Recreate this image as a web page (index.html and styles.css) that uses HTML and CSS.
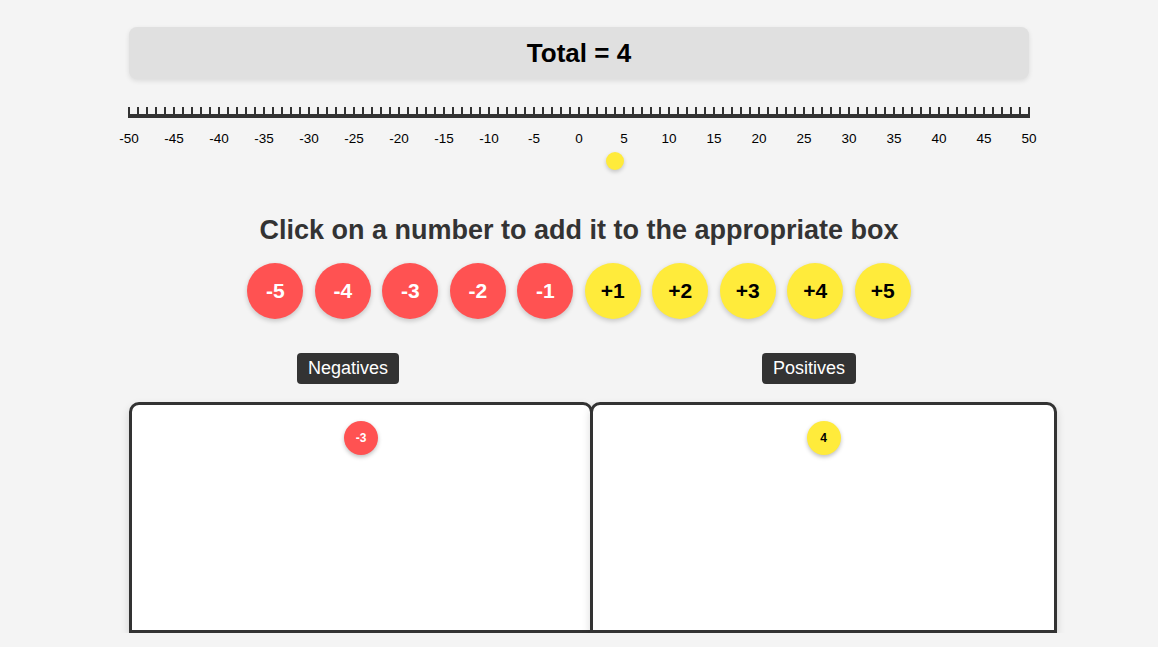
FILE: index.html
```html
<!DOCTYPE html>
<html>
<head>
<meta charset="utf-8">
<link rel="stylesheet" href="styles.css">
</head>
<body>
<div class="app">
  <div class="total">Total = 4</div>
  <div class="numberline">
    <div class="ticks"></div>
    <div class="axis"></div>
    <div class="labels">
      <span>-50</span><span>-45</span><span>-40</span><span>-35</span><span>-30</span><span>-25</span><span>-20</span><span>-15</span><span>-10</span><span>-5</span><span>0</span><span>5</span><span>10</span><span>15</span><span>20</span><span>25</span><span>30</span><span>35</span><span>40</span><span>45</span><span>50</span>
    </div>
    <div class="dot-row"><div class="dot" style="margin-left: 477px"></div></div>
  </div>
  <h2 class="prompt">Click on a number to add it to the appropriate box</h2>
  <div class="buttons">
    <button class="num neg">-5</button>
    <button class="num neg">-4</button>
    <button class="num neg">-3</button>
    <button class="num neg">-2</button>
    <button class="num neg">-1</button>
    <button class="num pos">+1</button>
    <button class="num pos">+2</button>
    <button class="num pos">+3</button>
    <button class="num pos">+4</button>
    <button class="num pos">+5</button>
  </div>
  <div class="tags">
    <div class="tag-col first"><span class="tag">Negatives</span></div>
    <div class="tag-col second"><span class="tag">Positives</span></div>
  </div>
  <div class="boxes">
    <div class="box first"><span class="chip neg">-3</span></div>
    <div class="box second"><span class="chip pos">4</span></div>
  </div>
</div>
</body>
</html>
```
FILE: styles.css
```css
html, body {
  margin: 0;
  background: #f4f4f4;
  font-family: "Liberation Sans", Arial, sans-serif;
  color: #000;
  overflow: hidden;
}
.app {
  width: 900px;
  margin: 0 auto;
  padding-top: 27px;
}
.total {
  height: 52px;
  background: #e0e0e0;
  border-radius: 8px;
  box-shadow: 0 2px 5px rgba(0, 0, 0, 0.1);
  display: flex;
  align-items: center;
  justify-content: center;
  font-size: 26px;
  font-weight: bold;
}
.numberline {
  margin-top: 28px;
}
.ticks {
  margin-left: -1px;
  width: 902px;
  height: 7px;
  background: repeating-linear-gradient(to right, #333 0 2px, transparent 2px 9px);
}
.axis {
  margin-left: -1px;
  width: 902px;
  height: 4px;
  background: #333;
}
.labels {
  display: grid;
  grid-template-columns: repeat(21, 45px);
  margin-left: -22.5px;
  width: 945px;
  margin-top: 13px;
  font-size: 13.5px;
  line-height: 16px;
  text-align: center;
}
.dot-row {
  margin-top: 5px;
  height: 18px;
}
.dot {
  width: 18px;
  height: 18px;
  border-radius: 50%;
  background: #ffeb3b;
  box-shadow: 0 2px 4px rgba(0, 0, 0, 0.2);
}
.prompt {
  margin: 45px 0 0;
  font-size: 27px;
  line-height: 30px;
  color: #333;
  text-align: center;
}
.buttons {
  margin-top: 18px;
  display: flex;
  justify-content: center;
  gap: 11.5px;
}
.num {
  flex-shrink: 0;
  width: 56px;
  height: 56px;
  border-radius: 50%;
  border: none;
  padding: 0;
  font-family: "Liberation Sans", Arial, sans-serif;
  font-size: 21px;
  font-weight: bold;
  box-shadow: 0 2px 5px rgba(0, 0, 0, 0.2);
}
.neg {
  background: #ff5252;
  color: #fff;
}
.pos {
  background: #ffeb3b;
  color: #000;
}
.tags {
  margin-top: 34px;
  display: flex;
}
.tag-col {
  flex-shrink: 0;
  width: 464px;
  box-sizing: border-box;
}
.tag-col.first {
  padding-left: 168px;
}
.tag-col.second {
  padding-left: 169px;
}
.tag {
  display: inline-block;
  background: #333;
  color: #fff;
  font-size: 18px;
  line-height: 23px;
  padding: 4px 11px;
  border-radius: 4px;
}
.boxes {
  margin-top: 18px;
  display: flex;
}
.box {
  flex-shrink: 0;
  box-sizing: border-box;
  height: 231px;
  border: 3px solid #333;
  border-radius: 10px 10px 0 0;
  background: #fff;
  box-shadow: 0 4px 8px rgba(0, 0, 0, 0.15);
  padding-top: 16px;
  display: flex;
  justify-content: center;
  align-items: flex-start;
}
.box.first {
  width: 464px;
}
.box.second {
  width: 467px;
  margin-left: -3px;
}
.chip {
  width: 34px;
  height: 34px;
  border-radius: 50%;
  display: flex;
  align-items: center;
  justify-content: center;
  font-size: 12px;
  font-weight: bold;
  box-shadow: 0 2px 4px rgba(0, 0, 0, 0.25);
}
```
